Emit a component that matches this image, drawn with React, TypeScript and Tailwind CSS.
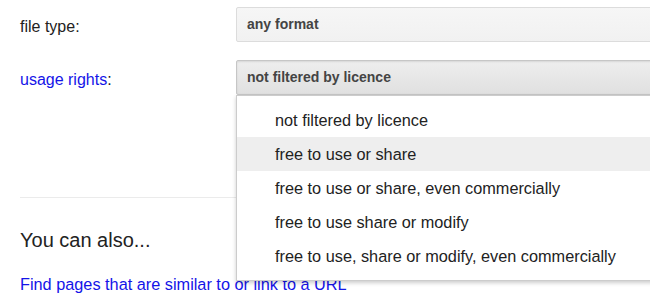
import React from 'react';

const licenceOptions = [
  'not filtered by licence',
  'free to use or share',
  'free to use or share, even commercially',
  'free to use share or modify',
  'free to use, share or modify, even commercially',
];

export default function App() {
  const hovered = 1;

  return (
    <div
      className="relative w-[650px] h-[294px] overflow-hidden bg-white pl-5 pt-[7px] text-[#222]"
      style={{ fontFamily: '"Liberation Sans", Arial, sans-serif' }}
    >
      {/* file type row */}
      <div className="flex items-center h-[35px]">
        <div className="w-[216px] shrink-0 text-[16px] pt-[4px]">file type:</div>
        <div className="w-[440px] shrink-0 h-[35px] flex items-center pl-[10px] rounded-[2px] border border-[#dcdcdc] bg-gradient-to-b from-[#f6f6f6] to-[#f1f1f1] text-[14px] font-bold text-[#444]">
          any format
        </div>
      </div>

      {/* usage rights row */}
      <div className="flex items-center h-[35px] mt-[18px]">
        <div className="w-[216px] shrink-0 text-[16px] pt-[4px]">
          <span className="text-[#1414e8]">usage rights</span>:
        </div>
        <div className="relative w-[440px] shrink-0 h-[35px]">
          <div className="h-[35px] flex items-center pl-[10px] rounded-[2px] border border-[#c6c6c6] bg-gradient-to-b from-[#eeeeee] to-[#e0e0e0] shadow-[inset_0_1px_2px_rgba(0,0,0,0.1)] text-[14px] font-bold text-[#444]">
            not filtered by licence
          </div>

          {/* dropdown menu */}
          <div className="absolute z-10 left-0 top-full w-full bg-white border border-[#cccccc] shadow-[0_2px_4px_rgba(0,0,0,0.2)] pt-[7px] pb-[7px]">
            {licenceOptions.map((option, i) => (
              <div
                key={option}
                className={`h-[34px] flex items-center pl-[38px] text-[16.3px] text-[#222] ${
                  i === hovered ? 'bg-[#eeeeee]' : ''
                }`}
              >
                {option}
              </div>
            ))}
          </div>
        </div>
      </div>

      <div className="mt-[102px] h-px bg-[#ebebeb] w-[600px]" />

      <div className="mt-[30px] text-[20px] leading-[24px]">You can also...</div>

      <a href="#" className="block mt-[23px] text-[16.3px] leading-[19px] text-[#1414e8]">
        Find pages that are similar to or link to a URL
      </a>
    </div>
  );
}
